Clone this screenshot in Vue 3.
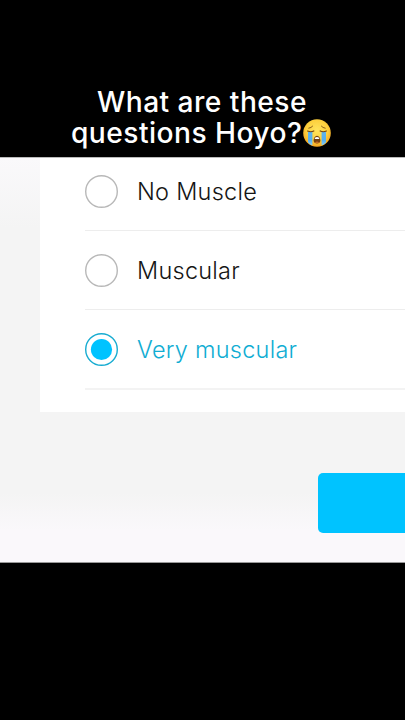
<script setup>
import { ref } from "vue";

const options = ref([
  { id: "none", label: "No Muscle" },
  { id: "muscular", label: "Muscular" },
  { id: "very", label: "Very muscular" },
]);

const selected = ref("very");
</script>

<template>
  <main class="screen">
    <header class="caption">
      <div class="caption_line first">What are these</div>
      <div class="caption_line second">
        <span>questions Hoyo?</span>
        <svg class="emoji" viewBox="0 0 28 28">
          <defs>
            <radialGradient id="face" cx="50%" cy="40%" r="60%">
              <stop offset="0" stop-color="#ffe45c" />
              <stop offset="0.65" stop-color="#fdcf3c" />
              <stop offset="1" stop-color="#f4a41f" />
            </radialGradient>
            <linearGradient id="tear" x1="0" y1="0" x2="0" y2="1">
              <stop offset="0" stop-color="#5fb4ec" />
              <stop offset="0.6" stop-color="#55aeee" />
              <stop offset="1" stop-color="#8ad0f7" />
            </linearGradient>
          </defs>
          <circle cx="14" cy="14" r="13.8" fill="url(#face)" />
          <path d="M5 13h4.4v13.4q-2.6-1-4.4-3z" fill="url(#tear)" />
          <path d="M18.6 13h4.4v10.4q-1.8 2-4.4 3z" fill="url(#tear)" />
          <g fill="none" stroke="#70400f" stroke-linecap="round">
            <path d="M4.6 12q3.2 1.5 6.2 0" stroke-width="1.2" />
            <path d="M17.2 12q3 1.5 6.2 0" stroke-width="1.2" />
            <path d="M5.8 9.2q2.5-.4 3.8-2M22.2 9.2q-2.5-.4-3.8-2" stroke-width="0.8" />
          </g>
          <path d="M14 16.8c2 0 3.4 2.4 3.4 4.8 0 2-1.5 3-3.4 3s-3.4-1-3.4-3c0-2.4 1.4-4.8 3.4-4.8z" fill="#74400f" />
          <path d="M11.8 19q2.2-2 4.4 0v.9h-4.4z" fill="#fff" />
          <path d="M11.8 23.4q2.2-1.6 4.4 0q-2.2 1.2-4.4 0z" fill="#c46a28" />
        </svg>
      </div>
    </header>

    <section class="page">
      <div class="card">
        <label v-for="option in options" :key="option.id" class="option" :class="[option.id, { active: selected === option.id }]">
          <input v-model="selected" type="radio" name="muscle" :value="option.id" />
          <svg class="radio" viewBox="0 0 33 33">
            <circle class="ring" cx="16.5" cy="16.5" r="15.8" />
            <circle v-if="selected === option.id" class="dot" cx="16.5" cy="16.5" r="10.6" />
          </svg>
          <span class="label">{{ option.label }}</span>
        </label>
      </div>
      <button class="submit" type="button" aria-label="Submit"></button>
    </section>
  </main>
</template>

<style>
body {
  margin: 0;
  background: #000;
}
</style>

<style scoped>
.screen {
  width: 405px;
  height: 720px;
  overflow: hidden;
  background: #000;
  font-family: Inter, "Liberation Sans", sans-serif;
}

.caption {
  box-sizing: border-box;
  height: 157px;
  padding-top: 87px;
  color: #fff;
  font-size: 28.2px;
  font-weight: 500;
  line-height: 31px;
  letter-spacing: 0.45px;
  white-space: nowrap;
}

.caption_line {
  display: flex;
  align-items: center;
  height: 31px;
}

.first {
  padding-left: 97px;
}

.second {
  padding-left: 71px;
}

.emoji {
  width: 28px;
  height: 28px;
  margin: 0 0 2px 1px;
}

.page {
  box-sizing: border-box;
  display: flex;
  flex-direction: column;
  height: 406px;
  overflow: hidden;
  border-top: 1px solid #bbb;
  border-bottom: 1px solid #999;
  background: linear-gradient(#faf9fb 0, #f4f4f4 70px, #f4f4f4 335px, #faf8fb 373px);
}

.card {
  flex: none;
  box-sizing: border-box;
  height: 254px;
  margin-left: 40px;
  padding-left: 45px;
  background: #fff;
}

.option {
  box-sizing: border-box;
  display: flex;
  align-items: center;
  height: 79px;
  border-bottom: 1px solid #ededed;
  color: #151515;
  font-size: 23.5px;
  font-weight: 300;
  letter-spacing: 0.25px;
}

.option.none {
  height: 73px;
  padding-bottom: 6px;
}

.option.very {
  height: 80px;
  border-bottom: 2px solid #f3f3f3;
}

.option input {
  display: none;
}

.radio {
  width: 33px;
  height: 33px;
  margin-right: 19px;
}

.ring {
  fill: none;
  stroke: #b8b8b8;
  stroke-width: 1.4;
}

.dot {
  fill: #00c3ff;
}

.active {
  color: #10add3;
}

.active .ring {
  stroke: #18acd1;
}

.submit {
  flex: none;
  width: 100px;
  height: 60px;
  margin: 61px 0 0 318px;
  padding: 0;
  border: 0;
  border-radius: 5px;
  background: #00c3ff;
}
</style>
